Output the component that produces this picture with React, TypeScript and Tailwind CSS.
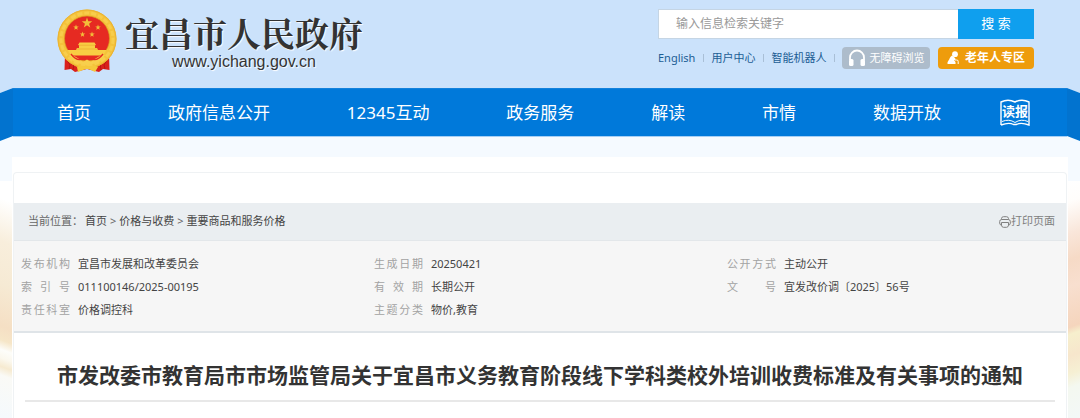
import type { ReactNode } from "react";

type MetaItem = {
  label: string;
  value: string;
};

const navItems = ["首页", "政府信息公开", "12345互动", "政务服务", "解读", "市情", "数据开放"];

const topLinks = ["English", "用户中心", "智能机器人"];

const breadcrumbs = ["首页", "价格与收费", "重要商品和服务价格"];

const metaColumns: MetaItem[][] = [
  [
    { label: "发布机构", value: "宜昌市发展和改革委员会" },
    { label: "索引号", value: "011100146/2025-00195" },
    { label: "责任科室", value: "价格调控科" },
  ],
  [
    { label: "生成日期", value: "20250421" },
    { label: "有效期", value: "长期公开" },
    { label: "主题分类", value: "物价,教育" },
  ],
  [
    { label: "公开方式", value: "主动公开" },
    { label: "文号", value: "宜发改价调〔2025〕56号" },
  ],
];

const STAR = "M0,-1 L0.235,-0.324 L0.951,-0.309 L0.38,0.124 L0.588,0.809 L0,0.4 L-0.588,0.809 L-0.38,0.124 L-0.951,-0.309 L-0.235,-0.324 Z";

function Emblem() {
  return (
    <svg viewBox="0 0 60 64" className="h-16 w-[60px] shrink-0" aria-hidden="true">
      <path d="M8 45 L7.500 61 L14 60 L18 63 L30 60 L42 63 L46 60 L52.500 61 L52 45 Z" fill="#d9201c" />
      <path d="M8 47 L13 56 L12 60 M52 47 L47 56 L48 60 M17 55 L16 61 M43 55 L44 61" stroke="#b81613" strokeWidth="1" fill="none" />
      <circle cx="30" cy="30" r="29.500" fill="#f4c23a" />
      <circle cx="30" cy="30" r="26" fill="none" stroke="#f8cd4b" strokeWidth="3" strokeDasharray="5 2" />
      <circle cx="30" cy="30" r="29" fill="none" stroke="#eab234" strokeWidth="1" />
      <circle cx="30" cy="29.500" r="22.500" fill="#e62a22" stroke="#d99a20" strokeWidth="0.700" />
      <g fill="#f3bd3a">
        <path d={STAR} transform="translate(30 14) scale(5.500)" />
        <path d={STAR} transform="translate(19 18.500) scale(2.900)" />
        <path d={STAR} transform="translate(41 18.500) scale(2.900)" />
        <path d={STAR} transform="translate(25.500 25.500) scale(2.900)" />
        <path d={STAR} transform="translate(35 25.500) scale(2.900)" />
      </g>
      <path d="M22.500 33.500 H37.500 L39 36 H38 V39 H40 L41 41 H50 L46 46.500 H14 L10 41 H19 L20 39 H22 V36 H21 Z" fill="#f8cd43" />
      <path d="M21.500 36.200 H38.500 M19.500 40 H40.500" stroke="#e9a52c" strokeWidth="0.600" />
      <path d="M12 46 C18 46 22 50 26 53 L30 50.500 L34 53 C38 50 42 46 48 46 L45 51 C40 55 36 55 33 55 L30 57 L27 55 C24 55 19 55 15 51 Z" fill="#f8cf4c" />
      <path d="M14 45 C20 53 25 51 30 48 C35 51 40 53 46 45" stroke="#e62a22" strokeWidth="1.300" fill="none" />
      <path d="M20 58 C24 55 27 58 30 57 C33 58 36 55 41 58 L38 63 L34 61 C32 59.500 28 59.500 26 61 L21 63 Z" fill="#f5c83c" />
    </svg>
  );
}

function HeadphonesIcon() {
  return (
    <svg viewBox="0 0 18 18" className="h-[18px] w-[18px] shrink-0" aria-hidden="true">
      <path d="M2 11 V8.500 A7 7 0 0 1 16 8.500 V11" fill="none" stroke="#fff" strokeWidth="1.800" />
      <rect x="1" y="10" width="4.500" height="7" rx="1.500" fill="#fff" />
      <rect x="12.500" y="10" width="4.500" height="7" rx="1.500" fill="#fff" />
    </svg>
  );
}

function ElderIcon() {
  return (
    <svg viewBox="0 0 12 14" className="h-[14px] w-3 shrink-0" aria-hidden="true">
      <circle cx="8" cy="3.200" r="2.900" fill="#fff" />
      <path d="M5 4.500 C2.500 6 3 8 1.200 10 C0 12 0.300 13 1 13 H8.500 C9 11 8 10.200 7 9.500 L9 8.500 L7.500 6.500 Z" fill="#fff" />
      <path d="M8.500 9.500 L9.500 9 Q11.200 8.800 11.200 10.500 V13" fill="none" stroke="#fff" strokeWidth="1" />
    </svg>
  );
}

function PrinterIcon() {
  return (
    <svg viewBox="0 0 12 12" className="h-3 w-3 shrink-0" fill="none" stroke="currentColor" strokeWidth="1" aria-hidden="true">
      <path d="M2.500 3.500 V2.500 Q2.700 0.700 4.500 0.700 H7.500 Q9.300 0.700 9.500 2.500 V3.500" />
      <path d="M2.500 9.200 Q0.700 9 0.700 7 V5.500 Q0.700 3.500 2.700 3.500 H9.300 Q11.300 3.500 11.300 5.500 V7 Q11.300 9 9.500 9.200" />
      <path d="M2.500 6.500 H9.500 V9.200 Q9.300 11.300 7.500 11.300 H4.500 Q2.700 11.300 2.500 9.200 Z" />
    </svg>
  );
}

function ReadingLink() {
  return (
    <a href="#" className="relative flex h-[27px] w-[30px] shrink-0 justify-center text-[13px] leading-[24px] font-bold text-white">
      <svg viewBox="0 0 30 27" className="absolute inset-0 h-full w-full" fill="none" stroke="#fff" aria-hidden="true">
        <path d="M1 26 V3 Q8 -0.500 15 3 Q22 -0.500 29 3 V26 Q21 23 16.500 25.500 H13.500 Q9 23 1 26" strokeWidth="1.400" />
        <path d="M2 22.500 Q9 19.500 15 23.500 Q21 19.500 28 22.500" strokeWidth="1" />
      </svg>
      <span className="relative">读报</span>
    </a>
  );
}

function NavFold({ flipped }: { flipped?: boolean }) {
  return (
    <svg
      viewBox="0 0 13 53"
      className={`h-[53px] w-[13px] shrink-0 ${flipped ? "-scale-x-100" : ""}`}
      aria-hidden="true"
    >
      <path d="M0 0 H13 L0 5 Z" fill="#cbe2fb" />
      <path d="M13 0 L0 5 V53 L13 48 Z" fill="#0273cf" />
    </svg>
  );
}

function SideGutter({ children }: { children: ReactNode }) {
  return (
    <div className="flex w-3 shrink-0 flex-col">
      <div className="h-10 bg-[#f5faff]" />
      {children}
    </div>
  );
}

function Header() {
  return (
    <header className="flex h-[88px] items-start justify-between bg-[#cbe2fb] pt-[9px] pr-[46px] pl-[57px]">
      <a href="#" className="flex gap-2 text-[#333333]">
        <Emblem />
        <span className="flex flex-col items-center pt-1">
          <span className="font-['Noto_Serif_CJK_SC','Source_Han_Serif_SC','Noto_Sans_CJK_SC',serif] text-[34px] leading-[40px] font-bold whitespace-nowrap [text-shadow:1px_1px_1px_#fff]">
            宜昌市人民政府
          </span>
          <span className="font-['Liberation_Sans',Arial,sans-serif] text-base leading-[18px] [text-shadow:1px_1px_1px_#fff]">
            www.yichang.gov.cn
          </span>
        </span>
      </a>

      <div className="flex w-[376px] flex-col gap-2">
        <form className="flex h-[30px]" onSubmit={(event) => event.preventDefault()}>
          <input
            type="text"
            aria-label="输入信息检索关键字"
            placeholder="输入信息检索关键字"
            className="min-w-0 flex-1 border border-r-0 border-[#c5d5e4] bg-white pl-[17px] text-xs outline-none placeholder:text-[#999999]"
          />
          <button type="submit" className="w-[76px] bg-[#0f9fee] text-[13px] text-white">
            搜 索
          </button>
        </form>

        <div className="flex h-[22px] items-center justify-between text-[11px] whitespace-nowrap text-[#1c5d94]">
          {topLinks.map((link) => (
            <span key={link} className="contents">
              <a href="#">{link}</a>
              <span className="h-2 w-px bg-[#a9bfd6]" />
            </span>
          ))}
          <button
            type="button"
            className="flex h-[22px] w-[88px] items-center justify-center gap-[3px] rounded bg-[#adbccb] text-[11px] text-white"
          >
            <HeadphonesIcon />
            无障碍浏览
          </button>
          <button
            type="button"
            className="flex h-[22px] w-24 items-center justify-center gap-1.5 rounded bg-[#ee9c0c] text-xs font-bold text-white"
          >
            <ElderIcon />
            老年人专区
          </button>
        </div>
      </div>
    </header>
  );
}

function MainNav() {
  return (
    <nav className="flex items-start bg-[#f5faff]">
      <NavFold />
      <div className="flex h-[49px] min-w-0 flex-1 items-center border-t border-b border-t-[#1482dc] border-b-[#a6cff5] bg-[#0079da] pr-[37px] pl-11">
        <ul className="mr-[59px] flex flex-1 justify-between text-[17px] whitespace-nowrap text-white">
          {navItems.map((item) => (
            <li key={item}>
              <a href="#">{item}</a>
            </li>
          ))}
        </ul>
        <ReadingLink />
      </div>
      <NavFold flipped />
    </nav>
  );
}

function MetaPanel() {
  return (
    <div className="grid grid-cols-[51fr_51fr_49fr] border-b-2 border-[#dfe4e8] bg-[#f6f6f6] pt-3 pb-[9px] pl-[7px]">
      {metaColumns.map((column, index) => (
        <dl key={index}>
          {column.map((item) => (
            <div key={item.label} className="flex h-[23px] items-center gap-2">
              <dt className="w-[49px] text-justify text-[#a3a3a3] [text-align-last:justify]">{item.label}</dt>
              <dd className="text-[#444444]">{item.value}</dd>
            </div>
          ))}
        </dl>
      ))}
    </div>
  );
}

export default function App() {
  return (
    <div className="bg-white font-['Noto_Sans','Noto_Sans_CJK_SC',sans-serif] text-[11px]">
      <Header />
      <MainNav />
      <div className="flex bg-[#f5faff]">
        <SideGutter>
          <div className="flex-1 bg-[linear-gradient(200deg,#ffffff_0px,#ffffff_20px,#f8eedc_60px,#f6ead4_100px,#f5dfc4_140px,#f6e6c8_153px,#fdfdfa_162px,#fbf8ee_170px,#f6ead0_178px,#fafaf6_186px,#f4f9fd_230px)]" />
        </SideGutter>
        <main className="mt-4 min-w-0 flex-1 bg-white px-px pt-[15px]">
          <article className="rounded-t border border-b-0 border-[#eff2f4]">
            <div className="mt-[30px] flex h-[38px] items-center justify-between border-b border-[#e3e7ea] bg-[#eaeef1] pr-[11px] pl-[14px]">
              <div className="flex items-center text-[#666666]">
                <span className="mr-0.5">当前位置：</span>
                <ol className="flex items-center gap-[3px]">
                  {breadcrumbs.map((crumb, index) => (
                    <li key={crumb} className="flex items-center gap-[3px]">
                      {index > 0 ? <span>&gt;</span> : null}
                      <a href="#" className="text-[#444444]">
                        {crumb}
                      </a>
                    </li>
                  ))}
                </ol>
              </div>
              <button type="button" className="flex items-center text-[#808080]">
                <PrinterIcon />
                打印页面
              </button>
            </div>
            <MetaPanel />
            <div className="mx-[11px] border-b-2 border-[#e8e8e8] pt-[26px] pb-[9px]">
              <h1 className="text-center text-[21px] leading-[32px] font-bold text-[#333333]">
                市发改委市教育局市市场监管局关于宜昌市义务教育阶段线下学科类校外培训收费标准及有关事项的通知
              </h1>
            </div>
            <div className="h-[17px]" />
          </article>
        </main>
        <SideGutter>
          <div className="flex-1 bg-[linear-gradient(160deg,#ffffff_0px,#fffdfb_20px,#f9e6da_50px,#f6dac6_75px,#f8dfcf_100px,#f5d5bd_138px,#f6efcd_145px,#f7e6cc_165px,#f6f0d4_182px,#f4f8f0_195px,#f3f8f8_230px)]" />
        </SideGutter>
      </div>
    </div>
  );
}
